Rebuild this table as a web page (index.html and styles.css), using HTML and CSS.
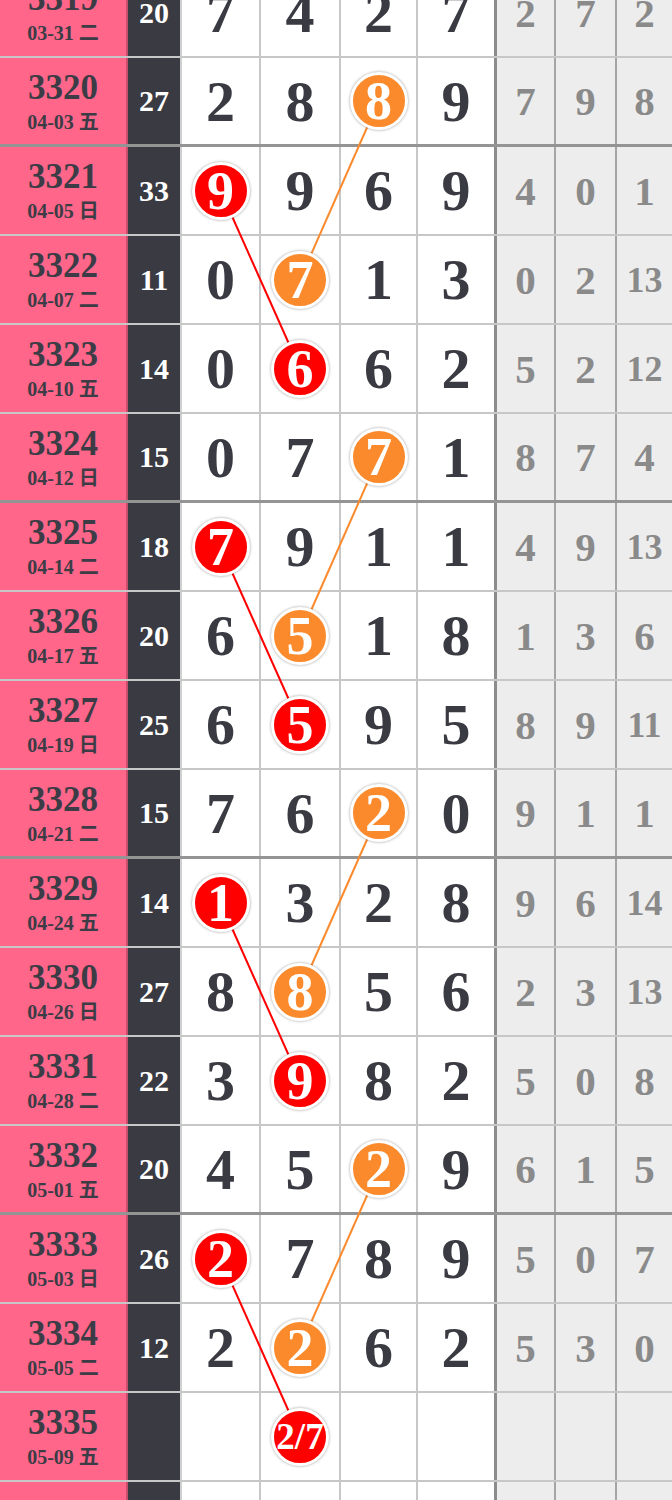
FILE: index.html
```html
<!DOCTYPE html>
<html lang="zh">
<head>
<meta charset="utf-8">
<title>走势图</title>
<link rel="stylesheet" href="styles.css">
</head>
<body>
<div class="board">
  <div class="row">
    <div class="cell issue"><span class="no">3319</span><span class="date">03-31 二</span></div>
    <div class="cell sum">20</div>
    <div class="cell d">7</div><div class="cell d">4</div><div class="cell d">2</div><div class="cell d last">7</div>
    <div class="cell g">2</div><div class="cell g">7</div><div class="cell g end">2</div>
  </div>
  <div class="row end">
    <div class="cell issue"><span class="no">3320</span><span class="date">04-03 五</span></div>
    <div class="cell sum">27</div>
    <div class="cell d">2</div><div class="cell d">8</div><div class="cell d"><span class="ball orange">8</span></div><div class="cell d last">9</div>
    <div class="cell g">7</div><div class="cell g">9</div><div class="cell g end">8</div>
  </div>
  <div class="row">
    <div class="cell issue"><span class="no">3321</span><span class="date">04-05 日</span></div>
    <div class="cell sum">33</div>
    <div class="cell d"><span class="ball red">9</span></div><div class="cell d">9</div><div class="cell d">6</div><div class="cell d last">9</div>
    <div class="cell g">4</div><div class="cell g">0</div><div class="cell g end">1</div>
  </div>
  <div class="row">
    <div class="cell issue"><span class="no">3322</span><span class="date">04-07 二</span></div>
    <div class="cell sum">11</div>
    <div class="cell d">0</div><div class="cell d"><span class="ball orange">7</span></div><div class="cell d">1</div><div class="cell d last">3</div>
    <div class="cell g">0</div><div class="cell g">2</div><div class="cell g end two">13</div>
  </div>
  <div class="row">
    <div class="cell issue"><span class="no">3323</span><span class="date">04-10 五</span></div>
    <div class="cell sum">14</div>
    <div class="cell d">0</div><div class="cell d"><span class="ball red">6</span></div><div class="cell d">6</div><div class="cell d last">2</div>
    <div class="cell g">5</div><div class="cell g">2</div><div class="cell g end two">12</div>
  </div>
  <div class="row end">
    <div class="cell issue"><span class="no">3324</span><span class="date">04-12 日</span></div>
    <div class="cell sum">15</div>
    <div class="cell d">0</div><div class="cell d">7</div><div class="cell d"><span class="ball orange">7</span></div><div class="cell d last">1</div>
    <div class="cell g">8</div><div class="cell g">7</div><div class="cell g end">4</div>
  </div>
  <div class="row">
    <div class="cell issue"><span class="no">3325</span><span class="date">04-14 二</span></div>
    <div class="cell sum">18</div>
    <div class="cell d"><span class="ball red">7</span></div><div class="cell d">9</div><div class="cell d">1</div><div class="cell d last">1</div>
    <div class="cell g">4</div><div class="cell g">9</div><div class="cell g end two">13</div>
  </div>
  <div class="row">
    <div class="cell issue"><span class="no">3326</span><span class="date">04-17 五</span></div>
    <div class="cell sum">20</div>
    <div class="cell d">6</div><div class="cell d"><span class="ball orange">5</span></div><div class="cell d">1</div><div class="cell d last">8</div>
    <div class="cell g">1</div><div class="cell g">3</div><div class="cell g end">6</div>
  </div>
  <div class="row">
    <div class="cell issue"><span class="no">3327</span><span class="date">04-19 日</span></div>
    <div class="cell sum">25</div>
    <div class="cell d">6</div><div class="cell d"><span class="ball red">5</span></div><div class="cell d">9</div><div class="cell d last">5</div>
    <div class="cell g">8</div><div class="cell g">9</div><div class="cell g end two">11</div>
  </div>
  <div class="row end">
    <div class="cell issue"><span class="no">3328</span><span class="date">04-21 二</span></div>
    <div class="cell sum">15</div>
    <div class="cell d">7</div><div class="cell d">6</div><div class="cell d"><span class="ball orange">2</span></div><div class="cell d last">0</div>
    <div class="cell g">9</div><div class="cell g">1</div><div class="cell g end">1</div>
  </div>
  <div class="row">
    <div class="cell issue"><span class="no">3329</span><span class="date">04-24 五</span></div>
    <div class="cell sum">14</div>
    <div class="cell d"><span class="ball red">1</span></div><div class="cell d">3</div><div class="cell d">2</div><div class="cell d last">8</div>
    <div class="cell g">9</div><div class="cell g">6</div><div class="cell g end two">14</div>
  </div>
  <div class="row">
    <div class="cell issue"><span class="no">3330</span><span class="date">04-26 日</span></div>
    <div class="cell sum">27</div>
    <div class="cell d">8</div><div class="cell d"><span class="ball orange">8</span></div><div class="cell d">5</div><div class="cell d last">6</div>
    <div class="cell g">2</div><div class="cell g">3</div><div class="cell g end two">13</div>
  </div>
  <div class="row">
    <div class="cell issue"><span class="no">3331</span><span class="date">04-28 二</span></div>
    <div class="cell sum">22</div>
    <div class="cell d">3</div><div class="cell d"><span class="ball red">9</span></div><div class="cell d">8</div><div class="cell d last">2</div>
    <div class="cell g">5</div><div class="cell g">0</div><div class="cell g end">8</div>
  </div>
  <div class="row end">
    <div class="cell issue"><span class="no">3332</span><span class="date">05-01 五</span></div>
    <div class="cell sum">20</div>
    <div class="cell d">4</div><div class="cell d">5</div><div class="cell d"><span class="ball orange">2</span></div><div class="cell d last">9</div>
    <div class="cell g">6</div><div class="cell g">1</div><div class="cell g end">5</div>
  </div>
  <div class="row">
    <div class="cell issue"><span class="no">3333</span><span class="date">05-03 日</span></div>
    <div class="cell sum">26</div>
    <div class="cell d"><span class="ball red">2</span></div><div class="cell d">7</div><div class="cell d">8</div><div class="cell d last">9</div>
    <div class="cell g">5</div><div class="cell g">0</div><div class="cell g end">7</div>
  </div>
  <div class="row">
    <div class="cell issue"><span class="no">3334</span><span class="date">05-05 二</span></div>
    <div class="cell sum">12</div>
    <div class="cell d">2</div><div class="cell d"><span class="ball orange">2</span></div><div class="cell d">6</div><div class="cell d last">2</div>
    <div class="cell g">5</div><div class="cell g">3</div><div class="cell g end">0</div>
  </div>
  <div class="row">
    <div class="cell issue"><span class="no">3335</span><span class="date">05-09 五</span></div>
    <div class="cell sum"></div>
    <div class="cell d"></div><div class="cell d"><span class="ball red small">2/7</span></div><div class="cell d"></div><div class="cell d last"></div>
    <div class="cell g"></div><div class="cell g"></div><div class="cell g end"></div>
  </div>
  <div class="row end">
    <div class="cell issue"></div>
    <div class="cell sum"></div>
    <div class="cell d"></div><div class="cell d"></div><div class="cell d"></div><div class="cell d last"></div>
    <div class="cell g"></div><div class="cell g"></div><div class="cell g end"></div>
  </div>

  <svg class="links" width="672" height="1602" viewBox="0 0 672 1602">
    <g stroke-width="2" fill="none">
      <line class="ln-orange" x1="378.5" y1="132.5" x2="300" y2="310.5"/>
      <line class="ln-red" x1="220.5" y1="221.5" x2="300" y2="399.5"/>
      <line class="ln-orange" x1="378.5" y1="488.5" x2="300" y2="666.5"/>
      <line class="ln-red" x1="220.5" y1="577.5" x2="300" y2="755.5"/>
      <line class="ln-orange" x1="378.5" y1="844.5" x2="300" y2="1022.5"/>
      <line class="ln-red" x1="220.5" y1="933.5" x2="300" y2="1111.5"/>
      <line class="ln-orange" x1="378.5" y1="1200.5" x2="300" y2="1378.5"/>
      <line class="ln-red" x1="220.5" y1="1289.5" x2="300" y2="1467.5"/>
    </g>
  </svg>
</div>
</body>
</html>
```
FILE: styles.css
```css
* {
  box-sizing: border-box;
  margin: 0;
  padding: 0;
}

html,
body {
  width: 672px;
  height: 1500px;
  overflow: hidden;
  background: #ffffff;
}

body {
  font-family: "Liberation Serif", "Times New Roman", "Noto Sans CJK SC", serif;
  font-weight: bold;
}

.board {
  position: relative;
  margin-top: -31px;
}

.row {
  display: grid;
  grid-template-columns: 128px 54px 79px 80px 77px 79px 59px 61px 1fr;
  height: 89px;
  border-bottom: 2px solid rgba(0, 0, 0, 0.22);
}

.row.end {
  border-bottom: 3px solid rgba(0, 0, 0, 0.42);
}

.cell {
  display: flex;
  align-items: center;
  justify-content: center;
  border-right: 2px solid rgba(0, 0, 0, 0.22);
}

.issue {
  flex-direction: column;
  background: #ff6689;
  color: #3c3c46;
}

.issue .no {
  font-size: 35px;
  line-height: 36px;
  font-weight: 600;
}

.issue .date {
  font-size: 20px;
  line-height: 22px;
  padding-top: 5px;
  font-family: "Liberation Serif", "Noto Sans CJK SC", serif;
}

.sum {
  background: #3a3a42;
  color: #ffffff;
  font-size: 30px;
  border-right-color: #cfcfcf;
}

.d {
  background: #ffffff;
  color: #3a3a42;
  font-size: 58px;
}

.d.last {
  border-right: 3px solid rgba(0, 0, 0, 0.45);
}

.g {
  background: #ededed;
  color: #8a8a8a;
  font-size: 41px;
  border-right-color: rgba(0, 0, 0, 0.3);
}

.g.two {
  font-size: 36px;
}

.g.end {
  border-right: none;
}

.ball {
  position: relative;
  z-index: 2;
  width: 58px;
  height: 58px;
  border-radius: 50%;
  border: 3px solid #ffffff;
  box-shadow: 0 0 3px rgba(0, 0, 0, 0.4);
  color: #ffffff;
  display: flex;
  align-items: center;
  justify-content: center;
  font-size: 54px;
  line-height: 1;
}

.ball.small {
  font-size: 37px;
}

.red {
  background: #ff0000;
}

.orange {
  background: #fb8a2c;
}

.links {
  position: absolute;
  left: 0;
  top: 0;
  z-index: 1;
  pointer-events: none;
}

.ln-red {
  stroke: #ff0000;
}

.ln-orange {
  stroke: #fb8a2c;
}
```
